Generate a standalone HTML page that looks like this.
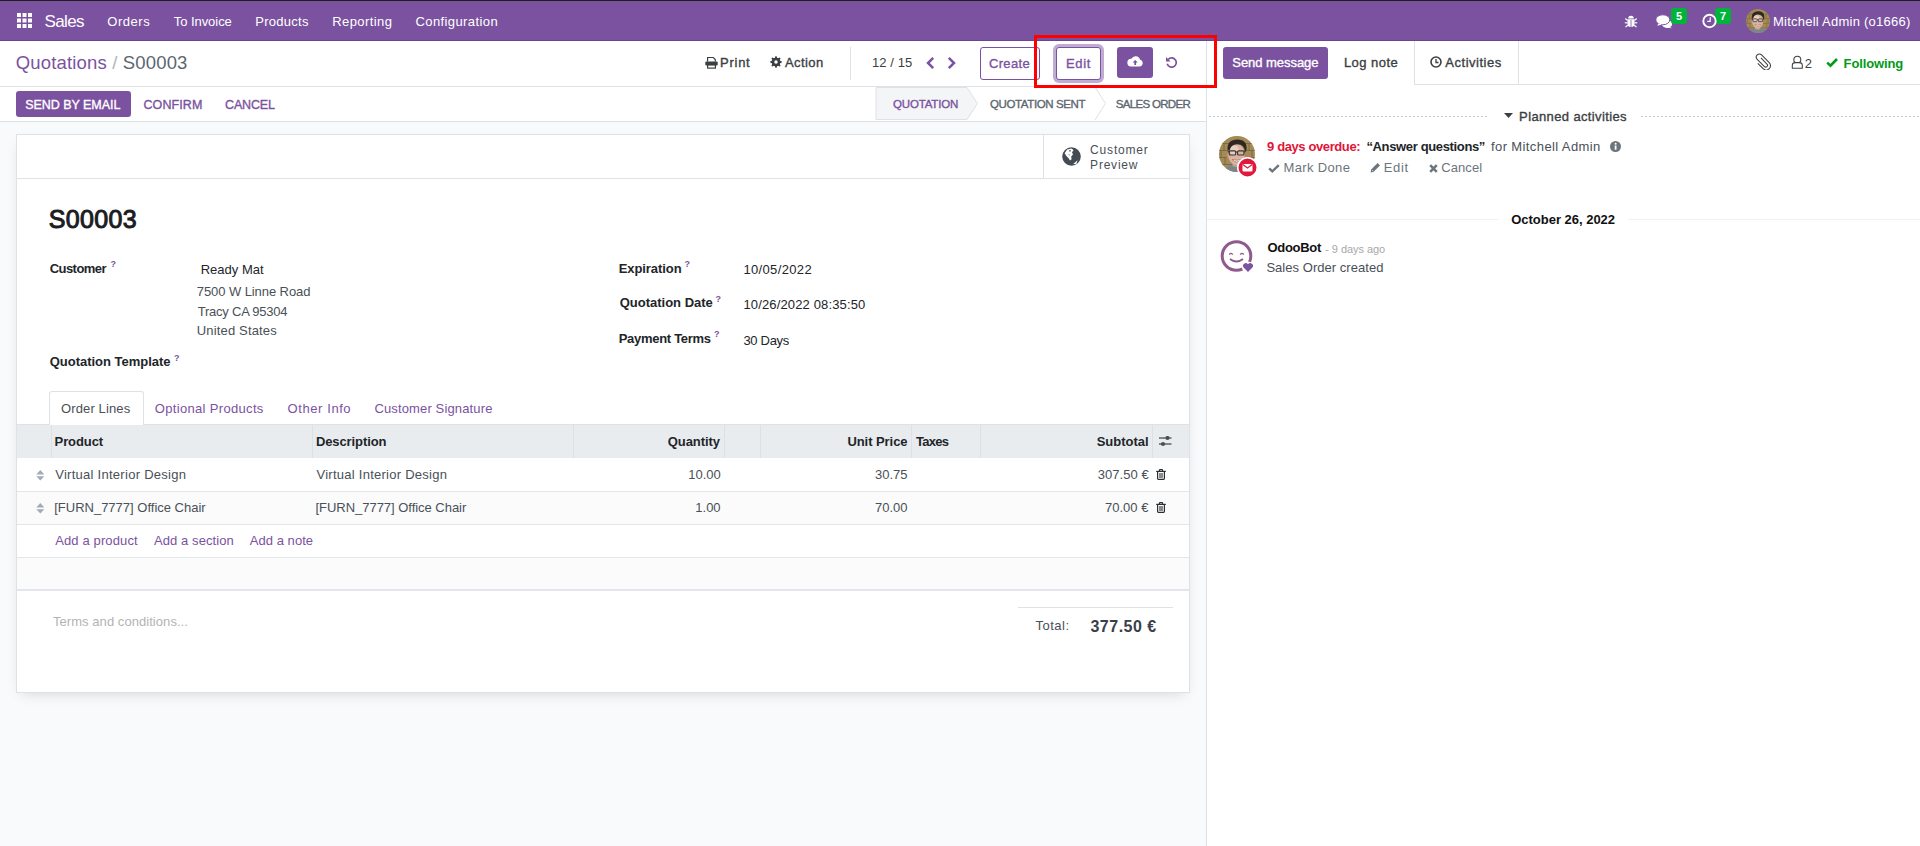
<!DOCTYPE html>
<html><head><meta charset="utf-8"><title>S00003</title>
<style>
html,body{margin:0;padding:0;width:1920px;height:846px;overflow:hidden;background:#f9fafb}
body{position:relative;font-family:"Liberation Sans", sans-serif}
.t{position:absolute;white-space:pre;line-height:1;font-family:"Liberation Sans", sans-serif}
svg{display:block}
</style></head><body>
<div style='position:absolute;left:0px;top:0px;width:1920px;height:846px;background:#f9fafb'></div>
<div style='position:absolute;left:0px;top:0px;width:1920px;height:1px;background:#1e1e1e'></div>
<div style='position:absolute;left:0px;top:1px;width:1920px;height:39px;background:#7b52a0'></div>
<div style='position:absolute;left:0px;top:40px;width:1920px;height:1px;background:#6b4490'></div>
<div style='position:absolute;left:0px;top:41px;width:1206px;height:80px;background:#fff'></div>
<div style='position:absolute;left:0px;top:86px;width:1206px;height:1px;background:#dee2e6'></div>
<div style='position:absolute;left:0px;top:121px;width:1206px;height:1px;background:#dee2e6'></div>
<div style='position:absolute;left:1206px;top:41px;width:714px;height:805px;background:#fff'></div>
<div style='position:absolute;left:1206px;top:41px;width:1px;height:805px;background:#dee2e6'></div>
<svg style='position:absolute;left:17px;top:13px;' width='15' height='15' viewBox='0 0 15 15'><rect x='0.0' y='0.0' width='4' height='4' fill='#fff'/><rect x='5.5' y='0.0' width='4' height='4' fill='#fff'/><rect x='11.0' y='0.0' width='4' height='4' fill='#fff'/><rect x='0.0' y='5.5' width='4' height='4' fill='#fff'/><rect x='5.5' y='5.5' width='4' height='4' fill='#fff'/><rect x='11.0' y='5.5' width='4' height='4' fill='#fff'/><rect x='0.0' y='11.0' width='4' height='4' fill='#fff'/><rect x='5.5' y='11.0' width='4' height='4' fill='#fff'/><rect x='11.0' y='11.0' width='4' height='4' fill='#fff'/></svg>
<svg style='position:absolute;left:1624px;top:14px;' width='14' height='14' viewBox='0 0 14 14'><g fill='#fff'><path d='M4.2 4.6 A2.8 2.8 0 0 1 9.8 4.6 Z'/><path d='M3.4 5.3 H10.6 V9.5 A3.6 3.6 0 0 1 3.4 9.5 Z'/></g><g stroke='#fff' stroke-width='1.2' fill='none'><path d='M3.4 6.2 L1.3 4.6'/><path d='M10.6 6.2 L12.7 4.6'/><path d='M3.3 8.8 H0.8'/><path d='M10.7 8.8 H13.2'/><path d='M3.8 11.2 L1.5 13'/><path d='M10.2 11.2 L12.5 13'/></g><path d='M7 6 V13' stroke='#7b52a0' stroke-width='0.8'/></svg>
<svg style='position:absolute;left:1655px;top:14px;' width='18' height='15' viewBox='0 0 18 15'><g fill='#fff'><ellipse cx='12' cy='10' rx='5.2' ry='3.9'/><path d='M13.5 12.5 L17.3 14.3 L10.5 13.6 Z'/><ellipse cx='7.8' cy='5.8' rx='7' ry='5' stroke='#7b52a0' stroke-width='1'/><path d='M3.4 9.3 L2.4 11.8 L7 10.6 Z'/></g></svg>
<div style='position:absolute;left:1671px;top:8px;width:16px;height:16px;background:#00b33a;border-radius:3px'></div>
<div style='position:absolute;left:1715px;top:8px;width:16px;height:16px;background:#00b33a;border-radius:3px'></div>
<svg style='position:absolute;left:1702px;top:13px;' width='15' height='16' viewBox='0 0 15 16'><circle cx='7.5' cy='8' r='6.2' fill='none' stroke='#fff' stroke-width='1.9'/><path d='M8.2 4.3 V8.4 H5.2' fill='none' stroke='#fff' stroke-width='1.2'/></svg>
<svg style='position:absolute;left:1746px;top:9px' width='24' height='24' viewBox='0 0 36 36'><defs><clipPath id='av'><circle cx='18' cy='18' r='18'/></clipPath></defs><g clip-path='url(#av)'><rect width='36' height='36' fill='#a38a56'/><g stroke='#7a6640' stroke-width='0.9'><path d='M0 7.5 H36 M0 14.5 H36 M0 21.5 H36 M0 28.5 H36'/><path d='M5 7.5 V14.5 M30 7.5 V14.5 M2 14.5 V21.5 M33 14.5 V21.5 M6 21.5 V28.5 M31 21.5 V28.5'/></g><path d='M5 36 Q7 28.5 14 28.5 H22 Q30 28.5 32 36 Z' fill='#7d8589'/><path d='M13.5 26 V30 Q17.5 32 21.5 30 V26 Z' fill='#caa088'/><ellipse cx='9.3' cy='19.5' rx='1.8' ry='2.8' fill='#c58a74'/><ellipse cx='17.5' cy='18.5' rx='8.3' ry='10.5' fill='#d9b4a0'/><ellipse cx='15.5' cy='14.5' rx='4.5' ry='5' fill='#ecd6ca' opacity='0.8'/><path d='M8.5 13.5 Q8 3.5 18.5 3.5 Q28.5 3.5 27.5 14 L26 16 Q25.5 8.5 18.5 8.2 Q11.5 8 10.5 15 Z' fill='#2f2822'/><g fill='none' stroke='#3a3634' stroke-width='1.2'><rect x='10.3' y='14.8' width='6.4' height='4.2' rx='1'/><rect x='18.6' y='14.8' width='6.4' height='4.2' rx='1'/><path d='M16.7 16 H18.6 M10.3 16 L8.8 15.5 M25 16 L26.5 15.5'/></g><path d='M13 23.5 Q17.8 28.5 22.5 23.5 Q17.8 25 13 23.5 Z' fill='#fff' stroke='#a8675a' stroke-width='0.7'/></g></svg>
<svg style='position:absolute;left:705px;top:56px;' width='13' height='13' viewBox='0 0 13 13'><path d='M2.6 5.5 V1.5 H8.3 L10.3 3.5 V5.5' fill='none' stroke='#3c4043' stroke-width='1.2'/><rect x='0.3' y='5.6' width='12.4' height='4' rx='1' fill='#3c4043'/><rect x='2.6' y='9' width='7.8' height='3.1' fill='#fff' stroke='#3c4043' stroke-width='1.2'/></svg>
<svg style='position:absolute;left:770px;top:56px;' width='12' height='12' viewBox='0 0 12 12'><polygon points='11.87,5.42 11.87,6.58 10.11,7.25 9.79,8.03 10.56,9.74 9.74,10.56 8.03,9.79 7.25,10.11 6.58,11.87 5.42,11.87 4.75,10.11 3.97,9.79 2.26,10.56 1.44,9.74 2.21,8.03 1.89,7.25 0.13,6.58 0.13,5.42 1.89,4.75 2.21,3.97 1.44,2.26 2.26,1.44 3.97,2.21 4.75,1.89 5.42,0.13 6.58,0.13 7.25,1.89 8.03,2.21 9.74,1.44 10.56,2.26 9.79,3.97 10.11,4.75' fill='#3c4043'/><circle cx='6' cy='6' r='4.3' fill='#3c4043'/><circle cx='6' cy='6' r='1.7' fill='#fff'/></svg>
<div style='position:absolute;left:850px;top:47px;width:1px;height:33px;background:#dee2e6'></div>
<svg style='position:absolute;left:925px;top:56px;' width='10' height='14' viewBox='0 0 10 14'><path d='M8.2 1.8 L3 7 L8.2 12.2' fill='none' stroke='#7b52a0' stroke-width='2.5'/></svg>
<svg style='position:absolute;left:947px;top:56px;' width='10' height='14' viewBox='0 0 10 14'><path d='M1.8 1.8 L7 7 L1.8 12.2' fill='none' stroke='#7b52a0' stroke-width='2.5'/></svg>
<div style='position:absolute;left:980px;top:47px;width:60px;height:33px;box-sizing:border-box;border:1px solid #7b52a0;border-radius:3px;background:#fff'></div>
<div style='position:absolute;left:1056px;top:47px;width:45px;height:33px;box-sizing:border-box;border:1px solid #7b52a0;border-radius:3px;background:#fff;box-shadow:0 0 0 3px #c0acd2'></div>
<div style='position:absolute;left:1117px;top:47px;width:36px;height:31px;background:#7b52a0;border-radius:3px'></div>
<svg style='position:absolute;left:1127px;top:56px;' width='16' height='11' viewBox='0 0 16 11'><path d='M4 10.5 H12.5 A3.5 3.5 0 0 0 13 3.6 A4.6 4.6 0 0 0 4.4 2.8 A3.8 3.8 0 0 0 4 10.5 Z' fill='#fff'/><path d='M8.2 4 L5.6 6.6 H7.3 V9 H9.1 V6.6 H10.8 Z' fill='#7b52a0'/></svg>
<svg style='position:absolute;left:1165px;top:56px;' width='13' height='12' viewBox='0 0 13 12'><path d='M3.2 3.5 A4.6 4.6 0 1 1 2.2 7.8' fill='none' stroke='#7b52a0' stroke-width='1.7'/><path d='M1 1 L1 5.6 L5.6 5.6 Z' fill='#7b52a0'/></svg>
<div style='position:absolute;left:16px;top:91px;width:115px;height:26px;background:#7b52a0;border-radius:3px'></div>
<svg style='position:absolute;left:875px;top:86px;' width='106' height='35' viewBox='0 0 106 35'><path d='M1 1.5 H92 L102.5 17.5 L92 33.5 H1 Z' fill='#f4f5f7' stroke='#dee2e6' stroke-width='1'/></svg>
<svg style='position:absolute;left:1092px;top:86px;' width='16' height='35' viewBox='0 0 16 35'><path d='M3 1 L13.5 17.5 L3 34' fill='none' stroke='#dee2e6' stroke-width='1'/></svg>
<div style='position:absolute;left:16px;top:134px;width:1174px;height:559px;box-sizing:border-box;background:#fff;border:1px solid #dee2e6;box-shadow:0 5px 14px -6px rgba(0,0,0,0.18)'></div>
<div style='position:absolute;left:17px;top:178px;width:1172px;height:1px;background:#dee2e6'></div>
<div style='position:absolute;left:1043px;top:135px;width:1px;height:43px;background:#dee2e6'></div>
<svg style='position:absolute;left:1062px;top:147px;' width='19' height='19' viewBox='0 0 19 19'><circle cx='9.5' cy='9.5' r='9.3' fill='#454b52'/><path d='M5.2 2.6 L9.6 1.4 L11.6 3.2 L10 5.2 L11 7.4 L9.2 9.6 L9.6 12.2 L8 13.4 L6.6 11.2 L4.6 9.2 L2.6 6.2 Z' fill='#fff'/><path d='M7.6 3 L9 3.6 L8.2 4.8 L7 4.2 Z M6.4 7 L7.6 7.6 L7.2 9 Z' fill='#454b52'/><path d='M11.2 16.9 L15.6 13.2 L14.2 17.2 Z' fill='#fff'/></svg>
<div class=t style='left:110.5px;top:259.5px;font-size:9px;color:#7b52a0;font-weight:700'>?</div>
<div class=t style='left:684.5px;top:259.5px;font-size:9px;color:#7b52a0;font-weight:700'>?</div>
<div class=t style='left:715.5px;top:294.5px;font-size:9px;color:#7b52a0;font-weight:700'>?</div>
<div class=t style='left:714px;top:330px;font-size:9px;color:#7b52a0;font-weight:700'>?</div>
<div class=t style='left:174px;top:354px;font-size:9px;color:#7b52a0;font-weight:700'>?</div>
<div style='position:absolute;left:17px;top:424px;width:1172px;height:1px;background:#dee2e6'></div>
<div style='position:absolute;left:49px;top:391px;width:95px;height:34px;box-sizing:border-box;background:#fff;border:1px solid #dee2e6;border-bottom:none;border-radius:3px 3px 0 0'></div>
<div style='position:absolute;left:17px;top:425px;width:1172px;height:33px;background:#e9ecef'></div>
<div style='position:absolute;left:51px;top:425px;width:1px;height:33px;background:#dde1e5'></div>
<div style='position:absolute;left:312px;top:425px;width:1px;height:33px;background:#dde1e5'></div>
<div style='position:absolute;left:573px;top:425px;width:1px;height:33px;background:#dde1e5'></div>
<div style='position:absolute;left:724px;top:425px;width:1px;height:33px;background:#dde1e5'></div>
<div style='position:absolute;left:760px;top:425px;width:1px;height:33px;background:#dde1e5'></div>
<div style='position:absolute;left:911px;top:425px;width:1px;height:33px;background:#dde1e5'></div>
<div style='position:absolute;left:980px;top:425px;width:1px;height:33px;background:#dde1e5'></div>
<div style='position:absolute;left:1152px;top:425px;width:1px;height:33px;background:#dde1e5'></div>
<div style='position:absolute;left:17px;top:458px;width:1172px;height:33px;background:#fff'></div>
<div style='position:absolute;left:17px;top:491px;width:1172px;height:1px;background:#e4e7ea'></div>
<div style='position:absolute;left:17px;top:492px;width:1172px;height:32px;background:#fbfbfc'></div>
<div style='position:absolute;left:17px;top:524px;width:1172px;height:1px;background:#e4e7ea'></div>
<div style='position:absolute;left:17px;top:525px;width:1172px;height:32px;background:#fff'></div>
<div style='position:absolute;left:17px;top:557px;width:1172px;height:1px;background:#e4e7ea'></div>
<div style='position:absolute;left:17px;top:558px;width:1172px;height:31px;background:#fbfbfc'></div>
<div style='position:absolute;left:17px;top:589px;width:1172px;height:2px;background:#e2e6ea'></div>
<svg style='position:absolute;left:36px;top:470px;' width='9' height='11' viewBox='0 0 9 11'><path d='M4.3 0 L8.3 4.4 H0.3 Z M4.3 10.6 L8.3 6.2 H0.3 Z' fill='#a3aab3'/></svg>
<svg style='position:absolute;left:36px;top:503px;' width='9' height='11' viewBox='0 0 9 11'><path d='M4.3 0 L8.3 4.4 H0.3 Z M4.3 10.6 L8.3 6.2 H0.3 Z' fill='#a3aab3'/></svg>
<svg style='position:absolute;left:1156px;top:469px;' width='10' height='11' viewBox='0 0 10 11'><g fill='none' stroke='#2b2f33' stroke-width='1.2'><path d='M1.6 3 V9.6 Q1.6 10.4 2.4 10.4 H7.6 Q8.4 10.4 8.4 9.6 V3'/><path d='M0.2 2.4 H9.8'/><path d='M3.2 2.3 L3.8 0.7 H6.2 L6.8 2.3'/></g><path d='M4 4 V9 M6 4 V9' stroke='#2b2f33' stroke-width='1.1'/></svg>
<svg style='position:absolute;left:1156px;top:502px;' width='10' height='11' viewBox='0 0 10 11'><g fill='none' stroke='#2b2f33' stroke-width='1.2'><path d='M1.6 3 V9.6 Q1.6 10.4 2.4 10.4 H7.6 Q8.4 10.4 8.4 9.6 V3'/><path d='M0.2 2.4 H9.8'/><path d='M3.2 2.3 L3.8 0.7 H6.2 L6.8 2.3'/></g><path d='M4 4 V9 M6 4 V9' stroke='#2b2f33' stroke-width='1.1'/></svg>
<svg style='position:absolute;left:1158px;top:436px;' width='14' height='11' viewBox='0 0 14 11'><g stroke='#4a4f55' stroke-width='1.3'><path d='M1 2 H13.5'/><path d='M1 8 H13.5'/></g><circle cx='9.5' cy='2' r='2.1' fill='#4a4f55'/><circle cx='5' cy='8' r='2.1' fill='#4a4f55'/></svg>
<div style='position:absolute;left:1018px;top:607px;width:155px;height:1px;background:#dee2e6'></div>
<div style='position:absolute;left:1223px;top:47px;width:105px;height:32px;background:#7b52a0;border-radius:3px'></div>
<div style='position:absolute;left:1414px;top:41px;width:1px;height:44px;background:#dee2e6'></div>
<div style='position:absolute;left:1518px;top:41px;width:1px;height:44px;background:#dee2e6'></div>
<div style='position:absolute;left:1414px;top:84px;width:506px;height:1px;background:#dee2e6'></div>
<svg style='position:absolute;left:1430px;top:56px;' width='12' height='12' viewBox='0 0 12 12'><circle cx='6' cy='6' r='5' fill='none' stroke='#3c4043' stroke-width='1.6'/><path d='M6 3 V6.5 H8.5' fill='none' stroke='#3c4043' stroke-width='1.3'/></svg>
<svg style='position:absolute;left:1754px;top:53px;' width='17' height='17' viewBox='0 0 17 17'><g transform='translate(8.3,8.6) rotate(-45)'><path d='M1.6 -3.5 V5 A1.8 1.8 0 0 1 -2 5 V-5.2 A3.1 3.1 0 0 1 4.2 -5.2 V5.6 A4.3 4.3 0 0 1 -4.4 5.6 V-2' fill='none' stroke='#3c4043' stroke-width='1.05'/></g></svg>
<svg style='position:absolute;left:1791px;top:55px;' width='13' height='15' viewBox='0 0 13 15'><circle cx='6.3' cy='4.7' r='3.5' fill='none' stroke='#3c4043' stroke-width='1.05'/><path d='M1.3 13.2 V10.4 Q1.3 7.6 4.6 7.6 H8 Q11.3 7.6 11.3 10.4 V13.2 Z' fill='#fff' stroke='#3c4043' stroke-width='1.05'/></svg>
<svg style='position:absolute;left:1826px;top:57px;' width='12' height='11' viewBox='0 0 12 11'><path d='M1.2 5.6 L4.5 8.6 L11 2' fill='none' stroke='#029a17' stroke-width='2.6'/></svg>
<div style='position:absolute;left:1209px;top:116px;width:279px;height:1px;background:repeating-linear-gradient(90deg,#c4c9ce 0 2px,transparent 2px 4px)'></div>
<div style='position:absolute;left:1641px;top:116px;width:279px;height:1px;background:repeating-linear-gradient(90deg,#c4c9ce 0 2px,transparent 2px 4px)'></div>
<svg style='position:absolute;left:1504px;top:113px;' width='9' height='5' viewBox='0 0 9 5'><path d='M0 0 H9 L4.5 5 Z' fill='#3c4043'/></svg>
<svg style='position:absolute;left:1219px;top:136px' width='36' height='36' viewBox='0 0 36 36'><defs><clipPath id='av2'><circle cx='18' cy='18' r='18'/></clipPath></defs><g clip-path='url(#av2)'><rect width='36' height='36' fill='#a38a56'/><g stroke='#7a6640' stroke-width='0.9'><path d='M0 7.5 H36 M0 14.5 H36 M0 21.5 H36 M0 28.5 H36'/><path d='M5 7.5 V14.5 M30 7.5 V14.5 M2 14.5 V21.5 M33 14.5 V21.5 M6 21.5 V28.5 M31 21.5 V28.5'/></g><path d='M5 36 Q7 28.5 14 28.5 H22 Q30 28.5 32 36 Z' fill='#7d8589'/><path d='M13.5 26 V30 Q17.5 32 21.5 30 V26 Z' fill='#caa088'/><ellipse cx='9.3' cy='19.5' rx='1.8' ry='2.8' fill='#c58a74'/><ellipse cx='17.5' cy='18.5' rx='8.3' ry='10.5' fill='#d9b4a0'/><ellipse cx='15.5' cy='14.5' rx='4.5' ry='5' fill='#ecd6ca' opacity='0.8'/><path d='M8.5 13.5 Q8 3.5 18.5 3.5 Q28.5 3.5 27.5 14 L26 16 Q25.5 8.5 18.5 8.2 Q11.5 8 10.5 15 Z' fill='#2f2822'/><g fill='none' stroke='#3a3634' stroke-width='1.2'><rect x='10.3' y='14.8' width='6.4' height='4.2' rx='1'/><rect x='18.6' y='14.8' width='6.4' height='4.2' rx='1'/><path d='M16.7 16 H18.6 M10.3 16 L8.8 15.5 M25 16 L26.5 15.5'/></g><path d='M13 23.5 Q17.8 28.5 22.5 23.5 Q17.8 25 13 23.5 Z' fill='#fff' stroke='#a8675a' stroke-width='0.7'/></g></svg>
<svg style='position:absolute;left:1237px;top:157px;' width='21' height='21' viewBox='0 0 21 21'><circle cx='10.5' cy='10.5' r='9.8' fill='#e2173d' stroke='#fff' stroke-width='1.6'/><rect x='5.5' y='7' width='10' height='7.5' rx='1' fill='#fff'/><path d='M5.8 7.6 L10.5 11 L15.2 7.6' fill='none' stroke='#e2173d' stroke-width='1.2'/></svg>
<svg style='position:absolute;left:1610px;top:141px;' width='11' height='11' viewBox='0 0 11 11'><circle cx='5.5' cy='5.5' r='5.5' fill='#6c757d'/><rect x='4.7' y='4.5' width='1.8' height='4.2' fill='#fff'/><circle cx='5.6' cy='2.8' r='1' fill='#fff'/></svg>
<svg style='position:absolute;left:1268px;top:164px;' width='12' height='9' viewBox='0 0 12 9'><path d='M1.2 4.4 L4.3 7.3 L10.8 1.2' fill='none' stroke='#6c757d' stroke-width='2.4'/></svg>
<svg style='position:absolute;left:1370px;top:162px;' width='11' height='11' viewBox='0 0 11 11'><path d='M0.6 10.6 L1.2 7.4 L7.6 1 L10 3.4 L3.6 9.8 Z' fill='#6c757d'/><path d='M2 8 L3 9' stroke='#fff' stroke-width='0.6'/></svg>
<svg style='position:absolute;left:1429px;top:164px;' width='9' height='9' viewBox='0 0 9 9'><path d='M1.2 1.2 L7.8 7.8 M7.8 1.2 L1.2 7.8' stroke='#6c757d' stroke-width='2.5'/></svg>
<div style='position:absolute;left:1207px;top:219px;width:291px;height:1px;background:#f0f1f3'></div>
<div style='position:absolute;left:1628px;top:219px;width:292px;height:1px;background:#f0f1f3'></div>
<svg style='position:absolute;left:1220px;top:239px;' width='36' height='36' viewBox='0 0 36 36'><circle cx='16.5' cy='17' r='14.3' fill='none' stroke='#8f5b8c' stroke-width='3'/><path d='M9.3 15.6 Q11 13.2 12.7 15.6' fill='none' stroke='#8f5b8c' stroke-width='1.3'/><path d='M20.3 15.6 Q22 13.2 23.7 15.6' fill='none' stroke='#8f5b8c' stroke-width='1.3'/><path d='M10 20 Q16.5 25 23 20' fill='none' stroke='#8f5b8c' stroke-width='2'/><circle cx='28' cy='28.5' r='6' fill='#fff'/><path d='M28 33 L23.6 28.6 A2.4 2.4 0 0 1 28 25.3 A2.4 2.4 0 0 1 32.4 28.6 Z' fill='#7b52a0'/></svg>
<div class=t style='left:44.40px;top:13.00px;font-size:17px;font-weight:400;color:#ffffff;letter-spacing:-0.600px;'>Sales</div>
<div class=t style='left:107.30px;top:15.00px;font-size:13px;font-weight:400;color:#ffffff;letter-spacing:0.540px;'>Orders</div>
<div class=t style='left:173.70px;top:15.00px;font-size:13px;font-weight:400;color:#ffffff;letter-spacing:-0.044px;'>To Invoice</div>
<div class=t style='left:255.20px;top:15.00px;font-size:13px;font-weight:400;color:#ffffff;letter-spacing:0.286px;'>Products</div>
<div class=t style='left:332.20px;top:15.00px;font-size:13px;font-weight:400;color:#ffffff;letter-spacing:0.425px;'>Reporting</div>
<div class=t style='left:415.50px;top:15.00px;font-size:13px;font-weight:400;color:#ffffff;letter-spacing:0.400px;'>Configuration</div>
<div class=t style='left:1773.00px;top:15.00px;font-size:13px;font-weight:400;color:#ffffff;letter-spacing:0.238px;'>Mitchell Admin (o1666)</div>
<div class=t style='left:15.70px;top:54.00px;font-size:18.5px;font-weight:400;color:#7b52a0;letter-spacing:0.167px;'><span style="color:#7b52a0">Quotations</span><span style="color:#adb5bd"> / </span><span style="color:#5c6670">S00003</span></div>
<div class=t style='left:720.00px;top:56.00px;font-size:13px;font-weight:400;color:#3c4043;letter-spacing:0.750px;-webkit-text-stroke:0.35px currentColor;'>Print</div>
<div class=t style='left:785.00px;top:56.00px;font-size:13px;font-weight:400;color:#3c4043;letter-spacing:0.400px;-webkit-text-stroke:0.35px currentColor;'>Action</div>
<div class=t style='left:872.00px;top:56.00px;font-size:13px;font-weight:400;color:#3c4043;letter-spacing:0.083px;'>12 / 15</div>
<div class=t style='left:989.00px;top:57.00px;font-size:13px;font-weight:400;color:#7b52a0;letter-spacing:0.320px;-webkit-text-stroke:0.35px currentColor;'>Create</div>
<div class=t style='left:1066.00px;top:57.00px;font-size:13px;font-weight:400;color:#7b52a0;letter-spacing:0.667px;-webkit-text-stroke:0.35px currentColor;'>Edit</div>
<div class=t style='left:25.25px;top:98.50px;font-size:12.5px;font-weight:400;color:#ffffff;letter-spacing:-0.038px;-webkit-text-stroke:0.35px currentColor;'>SEND BY EMAIL</div>
<div class=t style='left:143.50px;top:98.50px;font-size:12.5px;font-weight:400;color:#7b52a0;letter-spacing:0.083px;-webkit-text-stroke:0.35px currentColor;'>CONFIRM</div>
<div class=t style='left:225.00px;top:98.50px;font-size:12.5px;font-weight:400;color:#7b52a0;letter-spacing:-0.140px;-webkit-text-stroke:0.35px currentColor;'>CANCEL</div>
<div class=t style='left:893.00px;top:99.00px;font-size:11.5px;font-weight:400;color:#7b52a0;letter-spacing:-0.175px;-webkit-text-stroke:0.35px currentColor;'>QUOTATION</div>
<div class=t style='left:990.00px;top:99.00px;font-size:11.5px;font-weight:400;color:#5c6670;letter-spacing:-0.385px;-webkit-text-stroke:0.35px currentColor;'>QUOTATION SENT</div>
<div class=t style='left:1115.70px;top:99.00px;font-size:11.5px;font-weight:400;color:#5c6670;letter-spacing:-0.670px;-webkit-text-stroke:0.35px currentColor;'>SALES ORDER</div>
<div class=t style='left:1090.10px;top:144.00px;font-size:12px;font-weight:400;color:#495057;letter-spacing:0.814px;'>Customer</div>
<div class=t style='left:1090.10px;top:159.00px;font-size:12px;font-weight:400;color:#495057;letter-spacing:0.783px;'>Preview</div>
<div class=t style='left:48.70px;top:207.00px;font-size:25px;font-weight:400;color:#1b1d21;letter-spacing:0.360px;-webkit-text-stroke:1.0px currentColor;'>S00003</div>
<div class=t style='left:49.70px;top:261.50px;font-size:13px;font-weight:700;color:#212529;letter-spacing:-0.543px;'>Customer</div>
<div class=t style='left:200.70px;top:263.30px;font-size:13px;font-weight:400;color:#212529;letter-spacing:0.006px;'>Ready Mat</div>
<div class=t style='left:196.80px;top:285.30px;font-size:13px;font-weight:400;color:#495057;letter-spacing:-0.081px;'>7500 W Linne Road</div>
<div class=t style='left:197.80px;top:305.00px;font-size:13px;font-weight:400;color:#495057;letter-spacing:-0.238px;'>Tracy CA 95304</div>
<div class=t style='left:196.80px;top:324.00px;font-size:13px;font-weight:400;color:#495057;letter-spacing:0.158px;'>United States</div>
<div class=t style='left:49.70px;top:355.00px;font-size:13px;font-weight:700;color:#212529;letter-spacing:-0.012px;'>Quotation Template</div>
<div class=t style='left:618.70px;top:261.50px;font-size:13px;font-weight:700;color:#212529;letter-spacing:-0.067px;'>Expiration</div>
<div class=t style='left:743.40px;top:263.00px;font-size:13px;font-weight:400;color:#212529;letter-spacing:0.356px;'>10/05/2022</div>
<div class=t style='left:619.70px;top:296.20px;font-size:13px;font-weight:700;color:#212529;letter-spacing:0.000px;'>Quotation Date</div>
<div class=t style='left:743.40px;top:298.00px;font-size:13px;font-weight:400;color:#212529;letter-spacing:0.144px;'>10/26/2022 08:35:50</div>
<div class=t style='left:618.70px;top:332.00px;font-size:13px;font-weight:700;color:#212529;letter-spacing:-0.288px;'>Payment Terms</div>
<div class=t style='left:743.40px;top:333.50px;font-size:13px;font-weight:400;color:#212529;letter-spacing:-0.300px;'>30 Days</div>
<div class=t style='left:61.00px;top:401.80px;font-size:13px;font-weight:400;color:#495057;letter-spacing:0.130px;'>Order Lines</div>
<div class=t style='left:154.80px;top:401.80px;font-size:13px;font-weight:400;color:#7b52a0;letter-spacing:0.325px;'>Optional Products</div>
<div class=t style='left:287.60px;top:401.80px;font-size:13px;font-weight:400;color:#7b52a0;letter-spacing:0.578px;'>Other Info</div>
<div class=t style='left:374.40px;top:401.80px;font-size:13px;font-weight:400;color:#7b52a0;letter-spacing:0.141px;'>Customer Signature</div>
<div class=t style='left:54.60px;top:435.40px;font-size:13px;font-weight:700;color:#212529;letter-spacing:-0.100px;'>Product</div>
<div class=t style='left:315.90px;top:435.40px;font-size:13px;font-weight:700;color:#212529;letter-spacing:-0.090px;'>Description</div>
<div class=t style='left:667.80px;top:435.40px;font-size:13px;font-weight:700;color:#212529;letter-spacing:-0.071px;'>Quantity</div>
<div class=t style='left:847.40px;top:435.40px;font-size:13px;font-weight:700;color:#212529;letter-spacing:-0.056px;'>Unit Price</div>
<div class=t style='left:916.00px;top:435.40px;font-size:13px;font-weight:700;color:#212529;letter-spacing:-0.700px;'>Taxes</div>
<div class=t style='left:1096.70px;top:435.40px;font-size:13px;font-weight:700;color:#212529;letter-spacing:0.000px;'>Subtotal</div>
<div class=t style='left:55.20px;top:468.00px;font-size:13px;font-weight:400;color:#495057;letter-spacing:0.273px;'>Virtual Interior Design</div>
<div class=t style='left:316.50px;top:468.00px;font-size:13px;font-weight:400;color:#495057;letter-spacing:0.259px;'>Virtual Interior Design</div>
<div class=t style='left:688.30px;top:468.00px;font-size:13px;font-weight:400;color:#495057;letter-spacing:0.000px;'>10.00</div>
<div class=t style='left:875.00px;top:468.00px;font-size:13px;font-weight:400;color:#495057;letter-spacing:0.000px;'>30.75</div>
<div class=t style='left:1097.75px;top:468.00px;font-size:13px;font-weight:400;color:#495057;letter-spacing:0.036px;'>307.50 €</div>
<div class=t style='left:54.20px;top:501.00px;font-size:13px;font-weight:400;color:#495057;letter-spacing:0.000px;'>[FURN_7777] Office Chair</div>
<div class=t style='left:315.50px;top:501.00px;font-size:13px;font-weight:400;color:#495057;letter-spacing:-0.030px;'>[FURN_7777] Office Chair</div>
<div class=t style='left:695.30px;top:501.00px;font-size:13px;font-weight:400;color:#495057;letter-spacing:0.000px;'>1.00</div>
<div class=t style='left:875.00px;top:501.00px;font-size:13px;font-weight:400;color:#495057;letter-spacing:0.000px;'>70.00</div>
<div class=t style='left:1105.00px;top:501.00px;font-size:13px;font-weight:400;color:#495057;letter-spacing:0.000px;'>70.00 €</div>
<div class=t style='left:55.20px;top:534.00px;font-size:13px;font-weight:400;color:#7b52a0;letter-spacing:0.125px;'>Add a product</div>
<div class=t style='left:154.00px;top:534.00px;font-size:13px;font-weight:400;color:#7b52a0;letter-spacing:0.083px;'>Add a section</div>
<div class=t style='left:249.70px;top:534.00px;font-size:13px;font-weight:400;color:#7b52a0;letter-spacing:0.056px;'>Add a note</div>
<div class=t style='left:53.00px;top:614.50px;font-size:13px;font-weight:400;color:#b3b3b3;letter-spacing:0.055px;'>Terms and conditions...</div>
<div class=t style='left:1035.40px;top:619.00px;font-size:13px;font-weight:400;color:#495057;letter-spacing:0.520px;'>Total:</div>
<div class=t style='left:1090.40px;top:619.00px;font-size:16px;font-weight:700;color:#3a4049;letter-spacing:0.514px;'>377.50 €</div>
<div class=t style='left:1232.30px;top:56.00px;font-size:13px;font-weight:400;color:#ffffff;letter-spacing:-0.045px;-webkit-text-stroke:0.35px currentColor;'>Send message</div>
<div class=t style='left:1343.90px;top:56.00px;font-size:13px;font-weight:400;color:#3c4043;letter-spacing:0.457px;-webkit-text-stroke:0.35px currentColor;'>Log note</div>
<div class=t style='left:1445.30px;top:56.00px;font-size:13px;font-weight:400;color:#3c4043;letter-spacing:0.522px;-webkit-text-stroke:0.35px currentColor;'>Activities</div>
<div class=t style='left:1804.80px;top:56.50px;font-size:13px;font-weight:400;color:#3c4043;letter-spacing:0.000px;'>2</div>
<div class=t style='left:1843.60px;top:56.50px;font-size:13px;font-weight:700;color:#029a17;letter-spacing:-0.137px;'>Following</div>
<div class=t style='left:1519.10px;top:109.50px;font-size:13px;font-weight:400;color:#3c4043;letter-spacing:0.371px;-webkit-text-stroke:0.35px currentColor;'>Planned activities</div>
<div class=t style='left:1267.10px;top:140.30px;font-size:13px;font-weight:700;color:#e0163a;letter-spacing:-0.393px;'>9 days overdue:</div>
<div class=t style='left:1366.40px;top:140.30px;font-size:13px;font-weight:700;color:#212529;letter-spacing:-0.353px;'>“Answer questions”</div>
<div class=t style='left:1491.00px;top:140.30px;font-size:13px;font-weight:400;color:#495057;letter-spacing:0.394px;'>for Mitchell Admin</div>
<div class=t style='left:1283.60px;top:161.20px;font-size:13px;font-weight:400;color:#6c757d;letter-spacing:0.338px;'>Mark Done</div>
<div class=t style='left:1383.70px;top:161.20px;font-size:13px;font-weight:400;color:#6c757d;letter-spacing:0.700px;'>Edit</div>
<div class=t style='left:1441.20px;top:161.20px;font-size:13px;font-weight:400;color:#6c757d;letter-spacing:0.100px;'>Cancel</div>
<div class=t style='left:1511.20px;top:213.20px;font-size:13px;font-weight:700;color:#111;letter-spacing:-0.013px;'>October 26, 2022</div>
<div class=t style='left:1267.40px;top:241.30px;font-size:13px;font-weight:700;color:#111;letter-spacing:-0.283px;'>OdooBot</div>
<div class=t style='left:1325.20px;top:243.50px;font-size:11px;font-weight:400;color:#a8a8a8;letter-spacing:-0.045px;'>- 9 days ago</div>
<div class=t style='left:1266.40px;top:261.30px;font-size:13px;font-weight:400;color:#495057;letter-spacing:0.039px;'>Sales Order created</div>
<div class=t style='left:1676.00px;top:11.00px;font-size:11px;font-weight:700;color:#ffffff;letter-spacing:0.000px;'>5</div>
<div class=t style='left:1720.00px;top:11.00px;font-size:11px;font-weight:700;color:#ffffff;letter-spacing:0.000px;'>7</div>
<div style='position:absolute;left:1034px;top:35px;width:183px;height:53px;box-sizing:border-box;border:3px solid #ff0000'></div>
</body></html>
